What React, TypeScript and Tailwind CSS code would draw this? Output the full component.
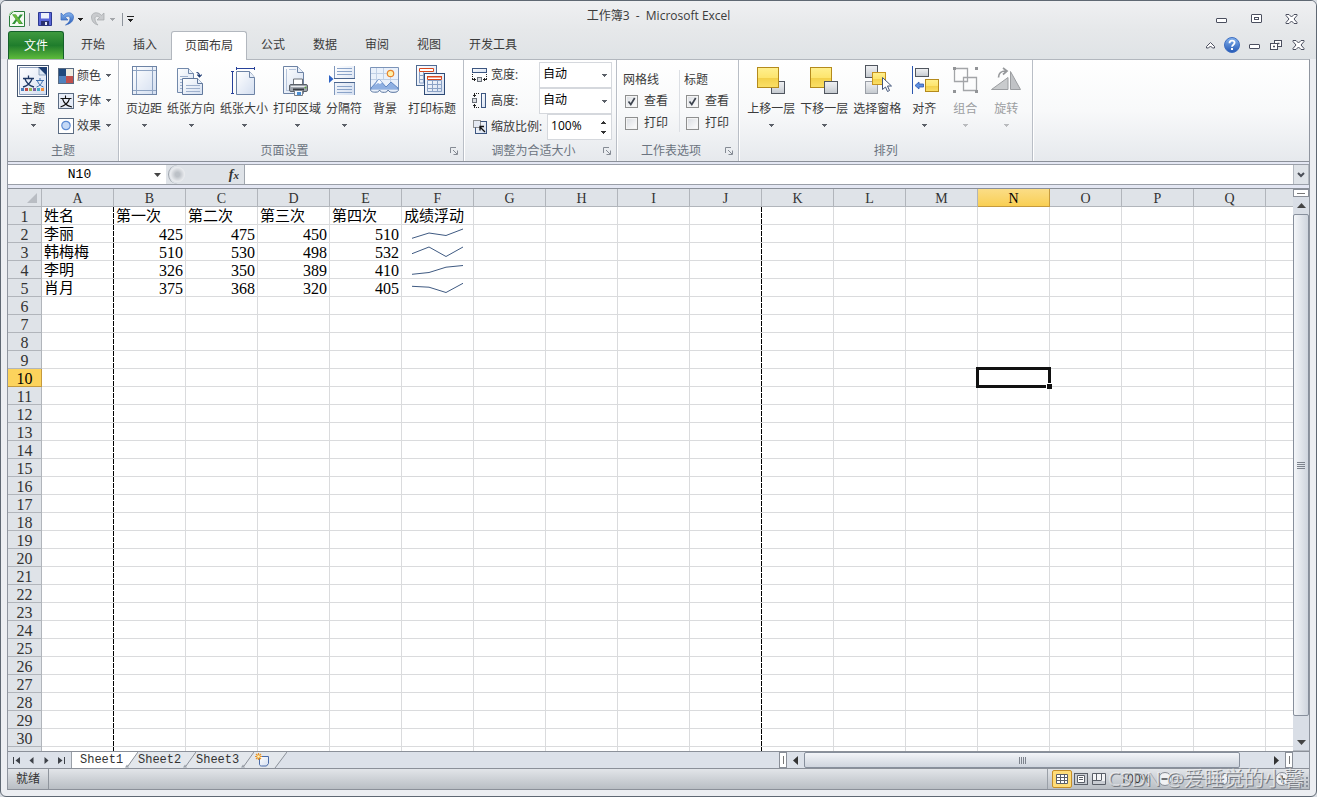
import type { ReactNode } from "react";

const COLUMNS = "ABCDEFGHIJKLMNOPQ".split("");
const ROWS = Array.from({ length: 30 }, (_, i) => i + 1);

const DATA: Record<number, string[]> = {
  1: ["姓名", "第一次", "第二次", "第三次", "第四次", "成绩浮动"],
  2: ["李丽", "425", "475", "450", "510"],
  3: ["韩梅梅", "510", "530", "498", "532"],
  4: ["李明", "326", "350", "389", "410"],
  5: ["肖月", "375", "368", "320", "405"],
};

const SPARKLINES: Record<number, string> = {
  2: "10,13.3 27,8 44,10.5 61,4",
  3: "10,10.7 27,4 44,13.5 61,4",
  4: "10,13.3 27,11.5 44,6.2 61,4.5",
  5: "10,7.3 27,8.2 44,13.5 61,4.3",
};

const Caret = ({ className = "fill-[#5b6068]" }: { className?: string }) => (
  <svg className={`shrink-0 ${className}`} width="5" height="3" viewBox="0 0 5 3" shapeRendering="crispEdges">
    <path d="M0 0h5v1H4v1H3v1H2V2H1V1H0z" />
  </svg>
);

const Svg = ({ size = 32, children }: { size?: number; children: ReactNode }) => (
  <svg className="shrink-0" width={size} height={size} viewBox={`0 0 ${size} ${size}`} fill="none">
    {children}
  </svg>
);

const Gradients = () => (
  <svg className="absolute" width="0" height="0" aria-hidden="true">
    <defs>
      <linearGradient id="paper" x1="0" y1="0" x2="1" y2="1">
        <stop offset="0" stopColor="#fff" />
        <stop offset="1" stopColor="#d3def0" />
      </linearGradient>
      <linearGradient id="gold" x1="0" y1="0" x2="0" y2="1">
        <stop offset="0" stopColor="#fff08f" />
        <stop offset="0.5" stopColor="#fde56f" />
        <stop offset="0.55" stopColor="#f3d14c" />
        <stop offset="1" stopColor="#fbe067" />
      </linearGradient>
      <linearGradient id="steel" x1="0" y1="0" x2="0" y2="1">
        <stop offset="0" stopColor="#f0f1f3" />
        <stop offset="0.5" stopColor="#dcdfe3" />
        <stop offset="1" stopColor="#c3c8ce" />
      </linearGradient>
      <linearGradient id="blue" x1="0" y1="0" x2="0" y2="1">
        <stop offset="0" stopColor="#86b4ee" />
        <stop offset="1" stopColor="#2358b5" />
      </linearGradient>
    </defs>
  </svg>
);

/* ---------- ribbon icons ---------- */

const ThemeIcon = () => (
  <Svg>
    <rect x="0.5" y="0.5" width="31" height="31" fill="#fff" stroke="#43556f" />
    <path d="M2.5 2.5h20l7 7v20h-27z" fill="url(#paper)" stroke="#8a9dbb" />
    <path d="M21 2h9v9z" fill="#1f3f73" />
    <path d="M22 3v7h7z" fill="#dbe7f5" stroke="#6f86a8" strokeWidth="0.7" />
    <path d="M29.500 10v20" stroke="#1f3f73" />
    <path d="M6 13.5h11M11.5 10.5v3M15 14c-1.5 4-5 7-9 8M8 14c1.5 4 5 7 9 8" stroke="#1f3864" strokeWidth="1.3" />
    <path d="M19 15.500h8M23 13v2.500M25.500 16c-1 3-3 5-6 6M20.500 16c1 3 3 5 6 6" stroke="#3d6fae" />
    <g shapeRendering="crispEdges">
      <path d="M4 23h3v3H4z" fill="#4a7ebb" />
      <path d="M8 23h3v3H8z" fill="#be4b48" />
      <path d="M12 23h3v3h-3z" fill="#98b954" />
      <path d="M16 23h3v3h-3z" fill="#7d60a0" />
      <path d="M20 23h3v3h-3z" fill="#46aac5" />
      <path d="M24 23h3v3h-3z" fill="#f59240" />
    </g>
  </Svg>
);

const ColorsIcon = () => (
  <Svg size={16}>
    <rect x="0.5" y="0.5" width="15" height="15" fill="#fff" stroke="#5a6b82" />
    <path d="M1 1h7v7H1z" fill="#1f497d" />
    <path d="M8 1h7v7H8z" fill="#eeece1" />
    <path d="M1 8h7v7H1z" fill="#4f81bd" />
    <path d="M8 8h7v7H8z" fill="#c0504d" />
  </Svg>
);

const FontsIcon = () => (
  <Svg size={16}>
    <rect x="0.5" y="0.5" width="15" height="15" fill="#e6ecf7" stroke="#5a6b82" />
    <path
      d="M2.5 5.500h11M7.500 2.500v3M11.500 5.500c-1 4-4.500 7-9 8.500M4.500 5.500c1 4 4.500 7.500 9.500 8.500"
      stroke="#111"
      strokeWidth="1.1"
    />
  </Svg>
);

const EffectsIcon = () => (
  <Svg size={16}>
    <rect x="0.5" y="0.5" width="15" height="15" fill="#fff" stroke="#5a6b82" />
    <circle cx="8" cy="7.5" r="4.2" fill="#c5d9f6" stroke="#5d8bd3" strokeWidth="1.2" />
  </Svg>
);

const MarginsIcon = () => (
  <Svg>
    <rect x="4.5" y="1.5" width="24" height="28" fill="url(#paper)" stroke="#6d83a5" />
    <path d="M8.5 2v27M24.5 2v27M5 5.500h23M5 25.500h23" stroke="#8ea3c2" />
  </Svg>
);

const OrientationIcon = () => (
  <Svg>
    <path d="M2.5 3.500h11l5 5v19h-16z" fill="url(#paper)" stroke="#7289ab" />
    <path d="M13.500 3.500v5h5" fill="#e9f0fa" stroke="#7289ab" />
    <path d="M5 11.500h8M5 14.500h4M5 17.500h3M5 20.500h3M5 23.500h3" stroke="#9fb1cd" />
    <path d="M7.500 13.500h15l5 5v11h-20z" fill="url(#paper)" stroke="#61789c" />
    <path d="M22.500 13.500v5h5" fill="#e9f0fa" stroke="#61789c" />
    <path d="M11 20.500h14M11 23.500h14M11 26.500h14" stroke="#9fb1cd" />
    <path d="M21.500 7.500c2 0 3 1.500 3 4M22.300 9.700l2.200 2.300 2.200-2.300" stroke="#1f3b73" strokeWidth="1.2" />
  </Svg>
);

const SizeIcon = () => (
  <Svg>
    <path d="M8.500 6.500h13l5 6v17h-18z" fill="url(#paper)" stroke="#6d83a5" />
    <path d="M21.500 6.500v6h5" fill="#e9f0fa" stroke="#6d83a5" />
    <path d="M8.500 3.500h18M8.500 2v3M26.500 2v3M4.500 6.500V29M3 6.500h3M3 28.500h3" stroke="#27419a" />
  </Svg>
);

const PrintAreaIcon = () => (
  <Svg>
    <path d="M2.500 1.500h14l6 6v21h-20z" fill="url(#paper)" stroke="#6d83a5" />
    <path d="M16.500 1.500v6h6" fill="#e9f0fa" stroke="#6d83a5" />
    <path d="M5.500 4v22M6 25.500h4M8 4.500h7" stroke="#b6c5dc" />
    <path d="M12.500 20v-6h9v6" fill="#fff" stroke="#6a7078" />
    <rect x="8.5" y="19.5" width="18" height="7" rx="1.5" fill="#a2a8b0" stroke="#5a6068" />
    <path d="M10 21.500h15" stroke="#e8eaed" />
    <path d="M12 24.500h11" stroke="#363a40" strokeWidth="2" />
    <path d="M13.500 25.500h8v5h-8z" fill="#f5f9ff" stroke="#7a8088" />
    <path d="M16 27h4v3h-4z" fill="#4c8fd4" />
    <circle cx="24.500" cy="22.500" r="1" fill="#5ba33b" />
  </Svg>
);

const BreaksIcon = () => (
  <Svg>
    <path d="M6 1h21v12H6zM6 18h21v12H6z" fill="url(#paper)" />
    <path d="M6.500 1v12.500h20V1M6.500 30V17.500h20V30" stroke="#7f97bb" />
    <path d="M6 13.500h21M6 17.500h21" stroke="#4b658e" />
    <path d="M9 3.500h15M9 6.500h15M9 9.500h15M9 21.500h15M9 24.500h15M9 27.500h15" stroke="#8aa3c8" />
    <path d="M1 10v8l4.500-4z" fill="#2d62c4" />
  </Svg>
);

const BackgroundIcon = () => (
  <Svg>
    <path d="M1.500 2.500h28v22h-28z" fill="#eaf1fb" stroke="#7b93b8" />
    <path d="M7.500 3v15M14.500 3v12M21.500 12v8M2 8.500h16M2 14.500h27" stroke="#c0d0e6" />
    <circle cx="21.500" cy="8.500" r="3.200" fill="#fff0a8" stroke="#e8832d" strokeWidth="1.2" />
    <path d="M2 23l8-9 7 8 5-5 7 6v2H2z" fill="#8fb0e2" stroke="#4d76b8" strokeWidth="0.8" />
    <path d="M10 14l3 3.500-2 1.500-2-1-3 2z" fill="#f5f9ff" />
    <path
      d="M1.500 24.500c0 2.500 3 3 7 2.500 1 0 1.500-1 2-2 1 2 2.500 2.500 5 2.300 2 0 3-.8 3.500-2.300 1 2 3 2.500 6 2.300 3 0 4.500-1 4.500-2.800"
      fill="#eaf1fb"
      stroke="#57749f"
    />
  </Svg>
);

const PrintTitlesIcon = () => (
  <Svg>
    <rect x="0.5" y="0.5" width="20" height="20" fill="url(#paper)" stroke="#4f6a92" />
    <path d="M3.500 3.500h14v3h-14z" fill="#fff" stroke="#d8471d" />
    <path d="M3.500 7v11h5M3.500 10.500h5M3.500 14.500h5M7.500 7v11" stroke="#8ba2c6" />
    <rect x="8.5" y="8.5" width="20" height="21" fill="url(#paper)" stroke="#2e4a76" />
    <path d="M11.500 11.500h14v3h-14z" fill="#fff" stroke="#d8471d" />
    <path d="M11 11h15v1.500H11z" fill="#d8471d" />
    <path d="M11.500 15.500h14v11h-14zM11.500 19.500h14M11.500 23.500h14M16.500 15v11M21.500 15v11" stroke="#8ba2c6" />
  </Svg>
);

const WidthIcon = () => (
  <Svg size={16}>
    <rect x="0.5" y="1.5" width="14" height="4" fill="url(#paper)" stroke="#3c5680" />
    <path d="M0.500 7v6M14.500 7v6" stroke="#222" strokeDasharray="1 1" />
    <path d="M0 12.500h4M11 12.500h4M2.500 11v3M12.500 11v3" stroke="#222" />
    <rect x="5.5" y="10.5" width="4" height="4" fill="#d8dbe0" stroke="#6a7078" />
  </Svg>
);

const HeightIcon = () => (
  <Svg size={16}>
    <rect x="9.5" y="0.5" width="4" height="14" fill="url(#paper)" stroke="#3c5680" />
    <path d="M2 0.500h6M2 14.500h6" stroke="#222" strokeDasharray="1 1" />
    <path d="M2.500 0v4M2.500 11v4M1 2.500h3M1 12.500h3" stroke="#222" />
    <rect x="0.5" y="5.5" width="4" height="4" fill="#d8dbe0" stroke="#6a7078" />
  </Svg>
);

const ScaleIcon = () => (
  <Svg size={16}>
    <rect x="3.5" y="2.5" width="11" height="12" fill="url(#paper)" stroke="#3c5680" />
    <rect x="1.5" y="1.5" width="7" height="7" fill="#e4e9f2" stroke="#333" strokeDasharray="1 1" />
    <path d="M8 8l5 5M8 11.500v-4h4" stroke="#111" strokeWidth="1.3" />
  </Svg>
);

const BringForwardIcon = () => (
  <Svg>
    <rect x="16.5" y="16.5" width="13" height="12" fill="url(#steel)" stroke="#50565f" />
    <rect x="2.5" y="2.5" width="21" height="20" fill="url(#gold)" stroke="#b48a1c" />
  </Svg>
);

const SendBackwardIcon = () => (
  <Svg>
    <rect x="2.5" y="2.5" width="21" height="20" fill="url(#gold)" stroke="#b48a1c" />
    <rect x="16.5" y="16.5" width="13" height="12" fill="url(#steel)" stroke="#50565f" />
  </Svg>
);

const SelectionPaneIcon = () => (
  <Svg>
    <rect x="4.5" y="0.5" width="12" height="12" fill="url(#steel)" stroke="#50565f" />
    <rect x="4.5" y="16.5" width="12" height="12" fill="url(#steel)" stroke="#9a9fa7" />
    <rect x="11.5" y="7.5" width="13" height="12" fill="url(#gold)" stroke="#c7941f" />
    <path d="M21.500 12.500v12l3-2.500 2 4.500 2-1-2-4.500h4z" fill="#fff" stroke="#42557a" />
  </Svg>
);

const AlignIcon = () => (
  <Svg>
    <path d="M4.500 1v28" stroke="#2b56ae" />
    <rect x="7.5" y="3.5" width="13" height="8" fill="url(#steel)" stroke="#50565f" />
    <rect x="17.5" y="14.5" width="13" height="12" fill="url(#gold)" stroke="#b48a1c" />
    <path d="M7 20.500l4-3.500v2h4.500v3H11v2z" fill="#5d8fe0" stroke="#2b56ae" strokeWidth="0.8" />
  </Svg>
);

const GroupIcon = () => (
  <Svg>
    <path d="M5.500 3.500h13v13h-13zM14.500 12.500h13v13h-13z" stroke="#a3a5a8" strokeWidth="1.3" />
    <path d="M4 2h3v3H4zM26 2h3v3h-3zM4 25h3v3H4zM26 25h3v3h-3z" fill="#929497" />
  </Svg>
);

const RotateIcon = () => (
  <Svg>
    <path d="M1.500 24.500L18 12.500v12z" fill="#c9cbcd" stroke="#9c9ea1" />
    <path d="M20.500 6.500v18h10z" fill="#c1c3c6" stroke="#9c9ea1" />
    <path d="M8.500 12.500c0-4 3-6.500 7-6.500M13 3l4 3-4 3.500" stroke="#97999c" strokeWidth="1.7" />
  </Svg>
);

/* ---------- title bar ---------- */

const Divider = () => <span className="h-[13px] w-px bg-[#8d939b]" />;

const MinimizeGlyph = () => (
  <Svg size={16}>
    <rect x="3.5" y="7.5" width="10" height="4" rx="0.5" fill="#fff" stroke="#4b4f5f" />
  </Svg>
);

const CloseGlyph = () => (
  <Svg size={16}>
    <path
      d="M3 3.500h3l2.500 2.500L11 3.500h3v1L11 8l3 3.500v1h-3L8.500 10 6 12.500H3v-1L6 8 3 4.500z"
      fill="#fff"
      stroke="#4b4f5f"
    />
  </Svg>
);

const TitleBar = () => (
  <div className="grid h-[30px] grid-cols-[1fr_auto_1fr] items-center">
    <div className="flex items-center pt-[6px]">
      <Svg size={18}>
        <path d="M5.500 1.500h11v15h-15v-11z" fill="#f4faf2" stroke="#2b7d3c" />
        <path d="M1.500 6c0-2.500 2-4.500 4.500-4.500" stroke="#9fd19d" strokeWidth="1.5" />
        <path d="M4 4.500h4l2 3 2-3h3l-3.500 4.500 3.500 5h-4l-2-3.200-2.300 3.200H4l3.700-5z" fill="#2f9238" />
        <path d="M4.500 4.500h3l6.500 9h-3z" fill="#6dba3c" />
      </Svg>
      <span className="ml-[3px] mr-[7px] flex">
        <Divider />
      </span>
      <button aria-label="保存" className="flex">
        <Svg size={16}>
          <path d="M1.500 1.500h13v13h-13z" fill="#5a66d8" stroke="#2c3990" />
          <path d="M4 2h8v5.500H4z" fill="#eef2fb" />
          <path d="M4 10h8v4.500H4z" fill="#2a316f" />
          <path d="M8 11h2v3H8z" fill="#e9edf8" />
        </Svg>
      </button>
      <button aria-label="撤消" className="ml-[6px] flex">
        <Svg size={16}>
          <path
            d="M2 2v7h7L6.500 6.500C8.500 4.500 11 5 11 7.500c0 2.500-1.500 4.500-4.500 6.500 5-1 8-4 8-8 0-4.500-6-6-10-1.700z"
            fill="url(#blue)"
            stroke="#3b6bc0"
            strokeWidth="0.7"
          />
        </Svg>
      </button>
      <button aria-label="撤消列表" className="ml-[3px] flex">
        <Caret className="fill-[#222]" />
      </button>
      <button aria-label="恢复" className="ml-[7px] flex">
        <Svg size={16}>
          <path
            d="M14 2v7H7l2.500-2.500C7.500 4.500 5 5 5 7.500c0 2.500 1 4.500 3 6.500-4-1-6.500-4-6.500-8 0-4.500 6-6 10-1.700z"
            fill="#c9cbce"
            stroke="#a4a7ab"
            strokeWidth="0.7"
          />
        </Svg>
      </button>
      <button aria-label="恢复列表" className="ml-[4px] flex">
        <Caret className="fill-[#a4a7ab]" />
      </button>
      <span className="ml-[7px] mr-[4px] flex">
        <Divider />
      </span>
      <button aria-label="自定义快速访问工具栏" className="flex flex-col items-center gap-[2px]">
        <span className="h-px w-[7px] bg-[#222]" />
        <Caret className="fill-[#222]" />
      </button>
    </div>
    <h1 className="whitespace-pre text-[12px] leading-4 text-[#3b3b3b]">工作簿3  -  Microsoft Excel</h1>
    <div className="flex justify-end gap-[19px] pr-[10px] pt-[6px]">
      <button aria-label="最小化">
        <MinimizeGlyph />
      </button>
      <button aria-label="最大化">
        <Svg size={16}>
          <rect x="3.5" y="3.5" width="10" height="8" rx="0.5" fill="#fff" stroke="#4b4f5f" />
          <rect x="6.5" y="6.5" width="4" height="2" stroke="#4b4f5f" />
        </Svg>
      </button>
      <button aria-label="关闭">
        <CloseGlyph />
      </button>
    </div>
  </div>
);

const TabBar = () => (
  <div className="flex h-[28px] items-end text-[12px] leading-4 text-[#3b3b3b]">
    <button className="h-[28px] w-[56px] rounded-t-[3px] border border-b-0 border-[#14602a] bg-linear-to-b from-[#3f9a3f] via-[#1f7d2c] to-[#5dbb3c] text-white">
      文件
    </button>
    <nav className="ml-[3px] flex h-[28px] flex-1">
      {["开始", "插入", "页面布局", "公式", "数据", "审阅", "视图", "开发工具"].map((tab) => (
        <button
          key={tab}
          className={
            tab === "页面布局"
              ? "relative z-10 -mb-px h-[29px] rounded-t-[3px] border border-b-0 border-[#b2b7be] bg-white px-[13px] pb-px"
              : "px-[14px]"
          }
        >
          {tab}
        </button>
      ))}
    </nav>
    <div className="flex h-[28px] items-center gap-[6px] pr-[3px]">
      <button aria-label="功能区最小化">
        <Svg size={16}>
          <path d="M4.500 9.500l4-4 4 4v1.500h-2l-2-2-2 2h-2z" fill="#fff" stroke="#4b4f5f" />
        </Svg>
      </button>
      <button aria-label="帮助">
        <Svg size={16}>
          <circle cx="8" cy="8" r="7.500" fill="url(#blue)" stroke="#3f6fc2" />
          <path
            d="M5.500 6.200c0-1.700 1.100-2.600 2.500-2.600s2.600.9 2.600 2.200C10.600 7.600 8 7.800 8 9.800"
            stroke="#fff"
            strokeWidth="1.8"
          />
          <path d="M7 11h2v2H7z" fill="#fff" />
        </Svg>
      </button>
      <button aria-label="最小化工作簿">
        <MinimizeGlyph />
      </button>
      <button aria-label="还原工作簿">
        <Svg size={16}>
          <rect x="6.5" y="3.5" width="7" height="6" fill="#fff" stroke="#4b4f5f" />
          <rect x="2.5" y="6.5" width="7" height="6" fill="#fff" stroke="#4b4f5f" />
          <path d="M5 9.500h2M9.500 6.500h2" stroke="#4b4f5f" strokeWidth="1.5" />
        </Svg>
      </button>
      <button aria-label="关闭工作簿">
        <CloseGlyph />
      </button>
    </div>
  </div>
);

/* ---------- ribbon ---------- */

type BigButtonProps = { icon: ReactNode; label: string; caret?: boolean; disabled?: boolean };

const BigButton = ({ icon, label, caret = true, disabled = false }: BigButtonProps) => (
  <button
    disabled={disabled}
    className="flex min-w-[36px] flex-col items-center pt-[5px] text-[#3b3b3b] disabled:text-[#9c9ea1]"
  >
    {icon}
    <span className="mt-[4px] whitespace-nowrap leading-4">{label}</span>
    <span className="mt-[7px] flex h-[3px]">
      {caret && <Caret className={disabled ? "fill-[#b9bbbe]" : "fill-[#5b6068]"} />}
    </span>
  </button>
);

const SmallButton = ({ icon, label }: { icon: ReactNode; label: string }) => (
  <button className="flex h-[25px] items-center text-[#3b3b3b]">
    {icon}
    <span className="ml-[3px] mr-[5px] leading-4">{label}</span>
    <Caret />
  </button>
);

type RibbonGroupProps = { title: string; launcher?: boolean; className: string; children: ReactNode };

const RibbonGroup = ({ title, launcher = false, className, children }: RibbonGroupProps) => (
  <section className="flex shrink-0 flex-col border-r border-[#b9bec6] shadow-[1px_0_0_#fff]">
    <div className={`flex h-[82px] ${className}`}>{children}</div>
    <div className="flex h-[18px] items-center text-[#6b7480]">
      <h2 className="flex-1 text-center leading-4">{title}</h2>
      {launcher && (
        <button aria-label={`${title}选项`} className="mr-[4px]">
          <svg width="9" height="9" viewBox="0 0 9 9" fill="none" stroke="#858b94">
            <path d="M0.500 6V0.500H6M3 3l4 4M7.500 3.500v4h-4" />
          </svg>
        </button>
      )}
    </div>
  </section>
);

const AutoSelect = ({ id, icon, label }: { id: string; icon: ReactNode; label: string }) => (
  <div className="flex h-[26px] items-center">
    {icon}
    <label htmlFor={id} className="ml-[3px] flex-1 leading-4">
      {label}
    </label>
    <span className="grid w-[73px] items-center">
      <select
        id={id}
        className="col-start-1 row-start-1 h-[26px] w-full appearance-none border border-[#d5d8dd] bg-white pb-[2px] pl-[3px] leading-4 text-black"
      >
        <option>自动</option>
      </select>
      <span className="pointer-events-none col-start-1 row-start-1 mr-[5px] justify-self-end">
        <Caret />
      </span>
    </span>
  </div>
);

const CheckBox = ({ id, label, checked = false }: { id: string; label: string; checked?: boolean }) => (
  <div className="ml-[2px] flex h-[22px] items-center">
    <span className="grid">
      <input
        id={id}
        type="checkbox"
        defaultChecked={checked}
        className="peer col-start-1 row-start-1 size-[13px] appearance-none border border-[#8e8f8f] bg-linear-to-br from-[#d9dce1] to-white shadow-[inset_0_0_0_1px_#f4f4f4]"
      />
      <svg
        className="pointer-events-none invisible col-start-1 row-start-1 peer-checked:visible"
        width="13"
        height="13"
        viewBox="0 0 13 13"
        fill="none"
      >
        <path d="M3.500 6.500l2.300 3L9.700 3" stroke="#3f4550" strokeWidth="1.7" />
      </svg>
    </span>
    <label htmlFor={id} className="ml-[6px] leading-4">
      {label}
    </label>
  </div>
);

const Ribbon = () => (
  <div className="flex h-[102px] overflow-hidden border-b border-[#8b9099] bg-linear-to-b from-white via-[#f8f9fa] to-[#e6e9ed] text-[12px] leading-4 text-[#3b3b3b]">
    <RibbonGroup title="主题" className="gap-[7px] px-[7px]">
      <BigButton icon={<ThemeIcon />} label="主题" />
      <div className="flex flex-col pt-[3px]">
        <SmallButton icon={<ColorsIcon />} label="颜色" />
        <SmallButton icon={<FontsIcon />} label="字体" />
        <SmallButton icon={<EffectsIcon />} label="效果" />
      </div>
    </RibbonGroup>
    <RibbonGroup title="页面设置" launcher className="gap-[5px] px-[7px]">
      <BigButton icon={<MarginsIcon />} label="页边距" />
      <BigButton icon={<OrientationIcon />} label="纸张方向" />
      <BigButton icon={<SizeIcon />} label="纸张大小" />
      <BigButton icon={<PrintAreaIcon />} label="打印区域" />
      <BigButton icon={<BreaksIcon />} label="分隔符" />
      <BigButton icon={<BackgroundIcon />} label="背景" caret={false} />
      <BigButton icon={<PrintTitlesIcon />} label="打印标题" caret={false} />
    </RibbonGroup>
    <RibbonGroup title="调整为合适大小" launcher className="w-[152px] flex-col pl-[8px] pr-[4px] pt-[2px]">
      <AutoSelect id="fit-width" icon={<WidthIcon />} label="宽度:" />
      <AutoSelect id="fit-height" icon={<HeightIcon />} label="高度:" />
      <div className="flex h-[26px] items-center">
        <ScaleIcon />
        <label htmlFor="scale" className="ml-[3px] flex-1 whitespace-nowrap leading-4">
          缩放比例:
        </label>
        <span className="flex h-[26px] w-[65px] border border-[#d5d8dd] bg-white">
          <input id="scale" defaultValue="100%" className="w-[47px] pb-[2px] pl-[3px] leading-4 text-black" />
          <span className="flex flex-1 flex-col items-center justify-center gap-[7px]">
            <button aria-label="增大" className="flex rotate-180">
              <Caret className="fill-[#333]" />
            </button>
            <button aria-label="减小" className="flex">
              <Caret className="fill-[#333]" />
            </button>
          </span>
        </span>
      </div>
    </RibbonGroup>
    <RibbonGroup title="工作表选项" launcher className="pl-[6px] pr-[9px]">
      <div className="w-[56px] pt-[11px]">
        <p className="mb-px leading-[18px]">网格线</p>
        <CheckBox id="grid-view" label="查看" checked />
        <CheckBox id="grid-print" label="打印" />
      </div>
      <div className="my-[10px] w-px bg-[#dcdfe4]" />
      <div className="ml-[4px] pt-[11px]">
        <p className="mb-px leading-[18px]">标题</p>
        <CheckBox id="head-view" label="查看" checked />
        <CheckBox id="head-print" label="打印" />
      </div>
    </RibbonGroup>
    <RibbonGroup title="排列" className="gap-[5px] px-[8px]">
      <BigButton icon={<BringForwardIcon />} label="上移一层" />
      <BigButton icon={<SendBackwardIcon />} label="下移一层" />
      <BigButton icon={<SelectionPaneIcon />} label="选择窗格" caret={false} />
      <BigButton icon={<AlignIcon />} label="对齐" />
      <BigButton icon={<GroupIcon />} label="组合" disabled />
      <BigButton icon={<RotateIcon />} label="旋转" disabled />
    </RibbonGroup>
  </div>
);

const FormulaBar = () => (
  <div className="border-b border-[#8b9099] bg-[#e4e7f3] pb-[3px] pt-[2px]">
    <div className="flex h-[21px] border-y border-[#9a9fa8] bg-[#dfe3e8]">
      <div className="flex w-[158px] items-center bg-white">
        <input
          aria-label="名称框"
          defaultValue="N10"
          className="h-[19px] w-[143px] bg-transparent pt-px text-center font-['Liberation_Mono',monospace] text-[13px] text-black"
        />
        <button aria-label="名称列表" className="ml-[3px]">
          <svg width="7" height="4" viewBox="0 0 7 4" fill="#444">
            <path d="M0 0h7L3.500 4z" />
          </svg>
        </button>
      </div>
      <div className="ml-[2px] flex w-[77px] items-center justify-between rounded-l-full border-l border-r border-[#a0a6ae] pl-px pr-[5px]">
        <span className="size-[15px] rounded-full bg-[radial-gradient(circle,#bcc1c7_20%,#eceef1_70%)]" />
        <button
          aria-label="插入函数"
          className="flex items-baseline font-['Liberation_Serif',serif] text-[14px] font-bold italic leading-4 text-[#333]"
        >
          f<span className="text-[11px]">x</span>
        </button>
      </div>
      <input aria-label="编辑栏" className="min-w-0 flex-1 bg-white px-1 text-[12px]" />
      <button
        aria-label="展开编辑栏"
        className="flex w-[16px] items-center justify-center border border-y-0 border-[#b4b9c1] bg-[#dfe3e8]"
      >
        <svg width="8" height="6" viewBox="0 0 8 6" fill="none">
          <path d="M1 1l3 3 3-3" stroke="#4a4e57" strokeWidth="2" />
        </svg>
      </button>
    </div>
  </div>
);

/* ---------- sheet ---------- */

const PAGE_BREAK =
  "border-b bg-[repeating-linear-gradient(to_bottom,#000_0_5px,transparent_5px_6px)] bg-[length:1px_100%] bg-right bg-no-repeat";

const Cell = ({ row, col, name }: { row: number; col: number; name: string }) => {
  const edge = name === "A" || name === "J" ? PAGE_BREAK : "border-b border-r";

  if (name === "F" && SPARKLINES[row]) {
    return (
      <td className={`h-[18px] border-[#dadbdd] p-0 ${edge}`}>
        <svg className="block h-[17px] w-[71px]" viewBox="0 0 71 17" fill="none">
          <polyline points={SPARKLINES[row]} stroke="#3f5a82" />
        </svg>
      </td>
    );
  }

  // active cell: thick frame that covers the gridlines, with the fill handle
  if (name === "N" && row === 10) {
    return (
      <td className={`h-[18px] border-[#dadbdd] p-0 ${edge}`}>
        <div className="relative h-[17px]">
          <div className="absolute -inset-[2px] border-[3px] border-[#111]" />
          <div className="absolute -bottom-[3px] -right-[3px] size-[6px] border-l border-t border-white bg-[#111]" />
        </div>
      </td>
    );
  }

  const numeric = row > 1 && col > 0;
  return (
    <td
      className={`h-[18px] whitespace-nowrap border-[#dadbdd] pb-0 pt-[2px] ${edge} ${
        numeric ? "pr-[2px] text-right text-[16px]" : "pl-[2px] text-[15px]"
      }`}
    >
      {DATA[row]?.[col]}
    </td>
  );
};

const Sheet = () => (
  <div className="min-h-0 min-w-0 flex-1 overflow-hidden bg-white">
    <table className="w-full table-fixed border-separate border-spacing-0 font-['Liberation_Serif','Noto_Sans_CJK_SC',serif] leading-[15px] text-black">
      <colgroup>
        <col className="w-[34px]" />
        {COLUMNS.map((c) => (
          <col key={c} className="w-[72px]" />
        ))}
        <col />
      </colgroup>
      <thead>
        <tr className="text-[14px] text-[#333]">
          <th className="h-[18px] border-b border-r border-[#b1b5bb] bg-[#dfe3e8] p-0">
            <svg className="ml-auto mr-[4px]" width="10" height="10" viewBox="0 0 10 10">
              <path d="M10 0v10H0z" fill="#b9bdc3" />
            </svg>
          </th>
          {COLUMNS.map((c) => (
            <th
              key={c}
              className={`h-[18px] border-b border-r px-0 pb-0 pt-[2px] font-normal ${
                c === "N"
                  ? "border-[#c59a3d] bg-linear-to-b from-[#fbdd86] to-[#f9cf52] text-black"
                  : "border-[#b1b5bb] bg-[#dfe3e8]"
              }`}
            >
              {c}
            </th>
          ))}
          <th className="border-b border-[#b1b5bb] bg-[#dfe3e8]" />
        </tr>
      </thead>
      <tbody>
        {ROWS.map((row) => (
          <tr key={row}>
            <th
              className={`h-[18px] border-b border-r px-0 pb-0 pt-[2px] text-[16px] font-normal ${
                row === 10
                  ? "border-[#c59a3d] bg-[#fcd35c] text-black"
                  : "border-[#b1b5bb] bg-[#dfe3e8] text-[#333]"
              }`}
            >
              {row}
            </th>
            {COLUMNS.map((c, i) => (
              <Cell key={c} row={row} col={i} name={c} />
            ))}
            <td className="border-b border-[#dadbdd]" />
          </tr>
        ))}
        <tr>
          <th className="h-[18px] border-r border-[#b1b5bb] bg-[#dfe3e8]" />
          {COLUMNS.map((c, i) => (
            <Cell key={c} row={31} col={i} name={c} />
          ))}
          <td />
        </tr>
      </tbody>
    </table>
  </div>
);

const VerticalScroll = () => (
  <div className="flex w-[16px] shrink-0 flex-col items-center bg-[#d9dee6]">
    <div className="flex h-[8px] w-full items-center justify-center border border-[#8a8f98] bg-white">
      <span className="h-px w-[8px] bg-[#777]" />
    </div>
    <button aria-label="向上滚动" className="flex h-[17px] w-full items-center justify-center">
      <svg width="9" height="5" viewBox="0 0 9 5" fill="#444">
        <path d="M0 5h9L4.500 0z" />
      </svg>
    </button>
    <div className="flex w-full flex-1 flex-col items-center justify-center gap-px rounded-[2px] border border-[#878f9c] bg-linear-to-r from-[#f4f6f9] to-[#cfd5de]">
      <span className="h-px w-[8px] bg-[#7d838d]" />
      <span className="h-px w-[8px] bg-[#7d838d]" />
      <span className="h-px w-[8px] bg-[#7d838d]" />
      <span className="h-px w-[8px] bg-[#7d838d]" />
    </div>
    <div className="h-[19px]" />
    <button
      aria-label="向下滚动"
      className="flex h-[16px] w-full items-center justify-center border-b border-[#b4b9c1]"
    >
      <svg width="9" height="5" viewBox="0 0 9 5" fill="#444">
        <path d="M0 0h9L4.500 5z" />
      </svg>
    </button>
  </div>
);

const Slant = ({ left }: { left: string }) => (
  <svg className="shrink-0" width="15" height="16" viewBox="0 0 15 16">
    <path d="M0 0h15v16H0z" fill="#e3e7ec" />
    <path d="M0 0h15L4 15l-2 1H0z" fill={left} />
    <path d="M15 0L5 14" stroke="#8b9099" fill="none" />
    <path d="M2 15.500l2-3 2 3z" fill="#9aa0a8" />
  </svg>
);

const NAV = [
  { label: "第一张工作表", path: "M1 1h1v7H1zM8 1v7L3.500 4.500z" },
  { label: "上一张工作表", path: "M6.500 1v7l-4-3.500z" },
  { label: "下一张工作表", path: "M2.500 1v7l4-3.500z" },
  { label: "最后一张工作表", path: "M7 1h1v7H7zM1 1v7l4.500-3.500z" },
];

const SplitHandle = () => (
  <div className="flex h-full w-[8px] items-center justify-center border border-[#8a8f98] bg-white">
    <span className="h-[8px] w-px bg-[#777]" />
  </div>
);

const SheetBar = () => (
  <div className="flex h-[17px] border-t border-[#8b9099] bg-[#dce1e9] font-['Liberation_Mono',monospace] text-[12px] leading-4 text-[#333]">
    <div className="flex min-w-0 flex-[3]">
      <div className="flex w-[64px] items-center gap-[6px] border-r border-[#9aa0a8] pl-[4px]">
        {NAV.map((n) => (
          <button key={n.label} aria-label={n.label}>
            <svg width="9" height="9" viewBox="0 0 9 9" fill="#3d4148">
              <path d={n.path} />
            </svg>
          </button>
        ))}
      </div>
      <button className="w-[51px] bg-white pl-[8px]">Sheet1</button>
      <Slant left="#fff" />
      <button className="w-[43px] bg-[#e3e7ec]">Sheet2</button>
      <Slant left="#e3e7ec" />
      <button className="w-[43px] bg-[#e3e7ec]">Sheet3</button>
      <Slant left="#e3e7ec" />
      <button aria-label="插入工作表" className="flex bg-[#e3e7ec] pr-[2px]">
        <Svg size={16}>
          <path
            d="M5.500 4.500h9v7l-2 2.500h-5c-1.500 0-2-1-2-2z"
            fill="url(#paper)"
            stroke="#4a6ba8"
          />
          <path d="M4.500 1v7M1 4.500h7M2 2l5 5M7 2L2 7" stroke="#e8952a" strokeWidth="1.2" />
          <circle cx="4.500" cy="4.500" r="1.300" fill="#fff4b8" />
        </Svg>
      </button>
      <svg className="shrink-0" width="15" height="16" viewBox="0 0 15 16">
        <path d="M0 0h15L3 16H0z" fill="#e3e7ec" />
        <path d="M15 0L3 16" stroke="#8b9099" fill="none" />
      </svg>
    </div>
    <div className="flex min-w-0 flex-[2] items-center">
      <SplitHandle />
      <button aria-label="向左滚动" className="flex w-[17px] justify-center">
        <svg width="5" height="9" viewBox="0 0 5 9" fill="#333">
          <path d="M5 0v9L0 4.500z" />
        </svg>
      </button>
      <div className="flex h-[16px] flex-1 items-center justify-center gap-px rounded-[2px] border border-[#878f9c] bg-linear-to-b from-[#f2f4f8] to-[#cfd5de]">
        <span className="h-[7px] w-px bg-[#7d838d]" />
        <span className="h-[7px] w-px bg-[#7d838d]" />
        <span className="h-[7px] w-px bg-[#7d838d]" />
        <span className="h-[7px] w-px bg-[#7d838d]" />
      </div>
      <div className="w-[28px]" />
      <button aria-label="向右滚动" className="flex w-[17px] justify-center">
        <svg width="5" height="9" viewBox="0 0 5 9" fill="#333">
          <path d="M0 0v9l5-4.500z" />
        </svg>
      </button>
      <SplitHandle />
    </div>
    <div className="w-[16px] shrink-0" />
  </div>
);

const StatusBar = () => (
  <div className="relative flex h-[22px] items-center border-y border-[#8b9099] bg-linear-to-b from-[#e2e5e9] to-[#b9bec4] text-[12px] leading-4 text-[#333]">
    <span className="px-[8px]">就绪</span>
    <span className="h-full w-px bg-[#8f959d]" />
    <span className="flex-1" />
    <span className="mr-[4px] h-full w-px bg-[#9aa0a8]" />
    <button aria-label="普通" className="rounded-[2px] border border-[#c58e28] bg-[#fedc78] px-px">
      <Svg size={16}>
        <path
          d="M2.500 3.500h11v9h-11zM2.500 6.500h11M2.500 9.500h11M6.500 3.500v9M10.500 3.500v9"
          fill="#fff"
          stroke="#5a5f68"
        />
      </Svg>
    </button>
    <button aria-label="页面布局视图" className="ml-[2px]">
      <Svg size={14}>
        <rect x="0.5" y="1.5" width="13" height="11" fill="#c9cdd3" stroke="#5a5f68" />
        <path d="M3.500 3.500h7v7h-7zM5 5.500h4M5 7.500h4" fill="#fff" stroke="#5a5f68" />
      </Svg>
    </button>
    <button aria-label="分页预览" className="ml-[4px]">
      <Svg size={14}>
        <path d="M0.500 1.500h13v11H.5z" fill="#f3f4f6" stroke="#5a5f68" />
        <path d="M4.500 2v6M9.500 2v6M1 8.500h8.500" stroke="#5a5f68" />
        <path d="M1 9h12v3H1z" fill="#c9cdd3" />
      </Svg>
    </button>
    <button className="ml-[13px] w-[33px]">100%</button>
    <button aria-label="缩小" className="ml-[5px]">
      <Svg size={16}>
        <circle cx="8" cy="8" r="6.500" fill="#f1f2f4" stroke="#878c95" />
        <path d="M4.500 8h7" stroke="#444" strokeWidth="1.5" />
      </Svg>
    </button>
    <input
      type="range"
      aria-label="显示比例"
      className="h-[16px] w-[101px] appearance-none bg-[linear-gradient(#858b94,#858b94)] bg-[length:100%_1px] bg-center bg-no-repeat [&::-webkit-slider-thumb]:h-[12px] [&::-webkit-slider-thumb]:w-[9px] [&::-webkit-slider-thumb]:appearance-none [&::-webkit-slider-thumb]:rounded-b-[4px] [&::-webkit-slider-thumb]:border [&::-webkit-slider-thumb]:border-[#7d838c] [&::-webkit-slider-thumb]:bg-[#f1f2f4]"
    />
    <button aria-label="放大">
      <Svg size={16}>
        <circle cx="8" cy="8" r="6.500" fill="#f1f2f4" stroke="#878c95" />
        <path d="M4.500 8h7M8 4.500v7" stroke="#444" strokeWidth="1.5" />
      </Svg>
    </button>
    <svg className="ml-[8px] mr-px mt-[6px]" width="10" height="10" viewBox="0 0 10 10" fill="#8a909b">
      <path d="M8 0h2v2H8zM4 4h2v2H4zM8 4h2v2H8zM0 8h2v2H0zM4 8h2v2H4zM8 8h2v2H8z" />
    </svg>
    <span className="pointer-events-none absolute -top-[4px] right-[5px] whitespace-nowrap text-[20px] leading-7 text-[#f1f2f3]/70 [text-shadow:1px_1px_0_#777b82]">
      CSDN @爱睡觉的小馨
    </span>
  </div>
);

export default function App() {
  return (
    <div className="bg-[#d8dce2]">
      <Gradients />
      <div className="flex h-screen flex-col overflow-hidden rounded-[6px] border border-[#5f6873] bg-[#eceef2] pb-[6px] font-['Open_Sans','Noto_Sans_CJK_SC',sans-serif]">
        <header className="bg-linear-to-b from-[#eff0f2] via-[#e6e8ea] to-[#dfe3e6] px-[7px]">
          <TitleBar />
          <TabBar />
        </header>
        <main className="mx-[6px] flex min-h-0 flex-1 flex-col border-x border-t border-[#8f959f] border-t-[#b2b7be]">
          <Ribbon />
          <FormulaBar />
          <div className="flex min-h-0 flex-1">
            <Sheet />
            <VerticalScroll />
          </div>
          <SheetBar />
          <StatusBar />
        </main>
      </div>
    </div>
  );
}
